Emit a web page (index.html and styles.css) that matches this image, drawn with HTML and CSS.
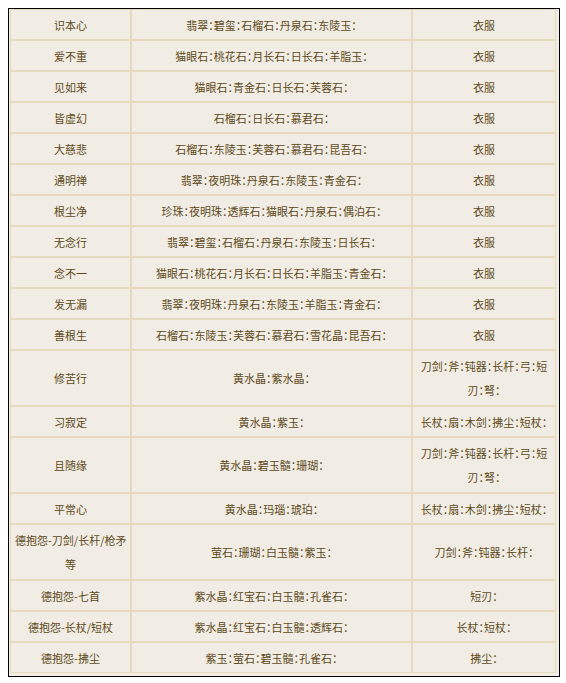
FILE: index.html
```html
<!DOCTYPE html>
<html lang="zh-CN">
<head>
<meta charset="utf-8">
<title>表</title>
<link rel="stylesheet" href="styles.css">
</head>
<body>
<table class="gems">
  <colgroup><col class="c1"><col class="c2"><col class="c3"></colgroup>
  <tbody>
    <tr><td>识本心</td><td>翡翠：碧玺：石榴石：丹泉石：东陵玉：</td><td>衣服</td></tr>
    <tr><td>爱不重</td><td>猫眼石：桃花石：月长石：日长石：羊脂玉：</td><td>衣服</td></tr>
    <tr><td>见如来</td><td>猫眼石：青金石：日长石：芙蓉石：</td><td>衣服</td></tr>
    <tr><td>皆虚幻</td><td>石榴石：日长石：慕君石：</td><td>衣服</td></tr>
    <tr><td>大慈悲</td><td>石榴石：东陵玉：芙蓉石：慕君石：昆吾石：</td><td>衣服</td></tr>
    <tr><td>通明禅</td><td>翡翠：夜明珠：丹泉石：东陵玉：青金石：</td><td>衣服</td></tr>
    <tr><td>根尘净</td><td>珍珠：夜明珠：透辉石：猫眼石：丹泉石：偶泊石：</td><td>衣服</td></tr>
    <tr><td>无念行</td><td>翡翠：碧玺：石榴石：丹泉石：东陵玉：日长石：</td><td>衣服</td></tr>
    <tr><td>念不一</td><td>猫眼石：桃花石：月长石：日长石：羊脂玉：青金石：</td><td>衣服</td></tr>
    <tr><td>发无漏</td><td>翡翠：夜明珠：丹泉石：东陵玉：羊脂玉：青金石：</td><td>衣服</td></tr>
    <tr><td>善根生</td><td>石榴石：东陵玉：芙蓉石：慕君石：雪花晶：昆吾石：</td><td>衣服</td></tr>
    <tr class="tall"><td>修苦行</td><td>黄水晶：紫水晶：</td><td>刀剑：斧：钝器：长杆：弓：短<br>刃：弩：</td></tr>
    <tr><td>习寂定</td><td>黄水晶：紫玉：</td><td>长杖：扇：木剑：拂尘：短杖：</td></tr>
    <tr class="tall"><td>且随缘</td><td>黄水晶：碧玉髓：珊瑚：</td><td>刀剑：斧：钝器：长杆：弓：短<br>刃：弩：</td></tr>
    <tr><td>平常心</td><td>黄水晶：玛瑙：琥珀：</td><td>长杖：扇：木剑：拂尘：短杖：</td></tr>
    <tr class="tall"><td>德抱怨-刀剑/长杆/枪矛<br>等</td><td>萤石：珊瑚：白玉髓：紫玉：</td><td>刀剑：斧：钝器：长杆：</td></tr>
    <tr><td>德抱怨-七首</td><td>紫水晶：红宝石：白玉髓：孔雀石：</td><td>短刃：</td></tr>
    <tr><td>德抱怨-长杖/短杖</td><td>紫水晶：红宝石：白玉髓：透辉石：</td><td>长杖：短杖：</td></tr>
    <tr><td>德抱怨-拂尘</td><td>紫玉：萤石：碧玉髓：孔雀石：</td><td>拂尘：</td></tr>
  </tbody>
</table>
</body>
</html>
```

FILE: styles.css
```css
html, body {
  margin: 0;
  padding: 0;
  background: #ffffff;
}
body {
  padding: 8px;
  font-family: "Noto Sans CJK SC", "Noto Sans", sans-serif;
  font-size: 11px;
  color: #5e4a1c;
}
.gems {
  border: 1px solid #000;
  border-collapse: separate;
  border-spacing: 0;
  table-layout: fixed;
  width: 551px;
  padding: 0 3px 3px 1px;
  background: #f1ede4;
}
.c1 { width: 121px; }
.c2 { width: 281px; }
.c3 { width: 144px; }
.gems td {
  border: 1px solid #e5dabd;
  padding: 3px 4px 2px;
  line-height: 24px;
  text-align: center;
  vertical-align: middle;
  font-feature-settings: "halt";
  white-space: nowrap;
}
.gems .tall td {
  padding-bottom: 3px;
}
```
